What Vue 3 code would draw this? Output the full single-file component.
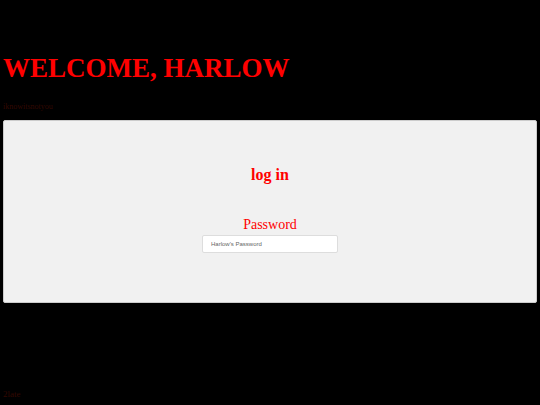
<script setup>
import { ref } from 'vue'

const nome = ref('Harlow')
const password = ref('')
</script>

<template>
  <main class="page">
    <h1>WELCOME, {{ nome.toUpperCase() }}</h1>
    <p class="hint">iknowitsnotyou</p>
    <form class="box" @submit.prevent>
      <h2>log in</h2>
      <label for="password">Password</label>
      <input id="password" v-model="password" type="password" :placeholder="`${nome}'s Password`" />
    </form>
    <p class="hint last">2late</p>
  </main>
</template>

<style>
body {
  background-color: #000;
}
</style>

<style scoped>
.page {
  box-sizing: border-box;
  min-height: 100vh;
  padding: 52px 3px 6px;
  display: flex;
  flex-direction: column;
  font-family: 'Liberation Serif', 'Times New Roman', serif;
  color: #f00;
}

h1 {
  margin: 0;
  font-size: 27px;
  line-height: 32px;
}

.hint {
  margin: 18px 0 0;
  font-size: 8px;
  line-height: 10px;
  color: #330800;
}

.box {
  margin-top: 8px;
  padding: 44px 16px 49px;
  display: flex;
  flex-direction: column;
  align-items: center;
  background-color: #f1f1f1;
  border: 1px solid #ccc;
  border-radius: 2px;
}

h2 {
  margin: 0 0 30px;
  font-size: 16px;
  line-height: 20px;
}

label {
  font-size: 14px;
  line-height: 20px;
}

input {
  box-sizing: border-box;
  width: 26%;
  min-width: 136px;
  height: 18px;
  padding: 0 8px;
  border: 1px solid #ddd;
  border-radius: 2px;
  background-color: #fff;
  font-family: 'Liberation Sans', Arial, sans-serif;
  font-size: 6px;
}

input::placeholder {
  color: #666;
}

.last {
  margin-top: auto;
  font-size: 9px;
}
</style>
